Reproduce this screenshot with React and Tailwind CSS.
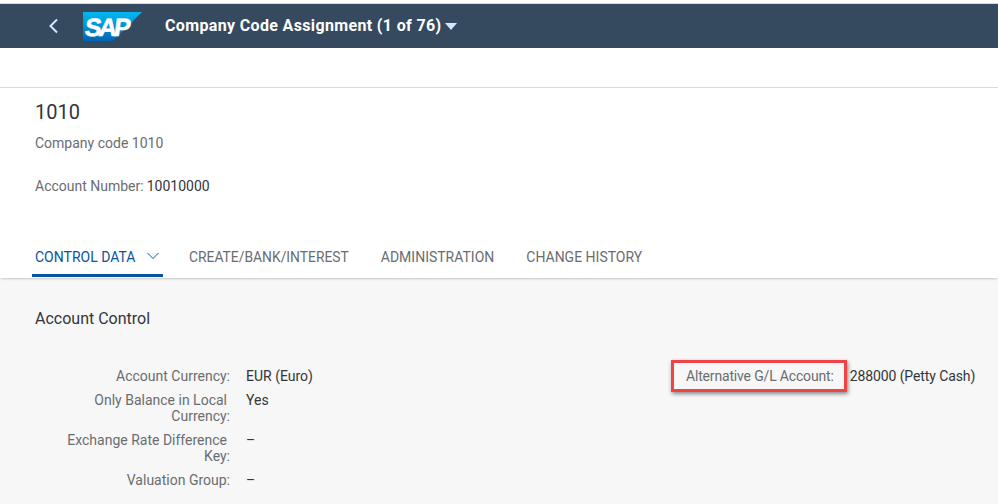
import React from "react";

function SapLogo() {
  return (
    <svg width="60" height="30" viewBox="0 0 60 30" className="block">
      <defs>
        <linearGradient id="sapGrad" x1="0" y1="0" x2="0" y2="1">
          <stop offset="0" stopColor="#00b8f1" />
          <stop offset="0.5" stopColor="#0092d6" />
          <stop offset="1" stopColor="#0063b4" />
        </linearGradient>
      </defs>
      <polygon points="0,0 59,0 30,29 0,29" fill="url(#sapGrad)" />
      <text x="4" y="24" transform="skewX(-7)" fontFamily="Liberation Sans" fontWeight="700" fontSize="25" letterSpacing="-2.8" stroke="#ffffff" strokeWidth="0.6" fill="#ffffff">SAP</text>
    </svg>
  );
}

function Row({ lines, value }) {
  return (
    <div className="flex items-start">
      <div className="w-[230px] shrink-0 text-right text-[#6a6d70] leading-[16px]">
        {lines.map((line, i) => (
          <div key={i} className={i < lines.length - 1 ? "pr-[3px]" : ""}>{line}</div>
        ))}
      </div>
      <div className="ml-4 text-[#32363a] leading-[16px]">{value}</div>
    </div>
  );
}

export default function App() {
  return (
    <div className="w-[998px] h-[504px] overflow-hidden bg-white relative font-['Roboto','Liberation_Sans',sans-serif] text-[14px]">
      <div className="h-1 bg-white border-b border-[#d8d8d8]" />
      <header className="h-11 bg-[#354a5f] flex items-center pl-[48px]">
        <svg width="12" height="16" viewBox="0 0 12 16" fill="none" stroke="#d1e8ff" strokeWidth="2">
          <path d="M9 1.5 L2.5 8 L9 14.5" />
        </svg>
        <div className="ml-[23px] mt-px">
          <SapLogo />
        </div>
        <div className="ml-[22px] flex items-center text-white font-bold text-[16px] tracking-[0.35px]">
          Company Code Assignment (1 of 76)
          <span className="ml-[4px] mt-px w-0 h-0 border-l-[6px] border-r-[6px] border-t-[7px] border-l-transparent border-r-transparent border-t-[#d1e8ff]" />
        </div>
      </header>
      <div className="h-10 border-b border-[#d9d9d9]" />
      <section className="pl-[35px] pt-[12px]">
        <h1 className="text-[20px] leading-[24px] text-[#32363a]">1010</h1>
        <p className="mt-[10px] text-[#6a6d70] leading-[18px]">Company code 1010</p>
        <p className="mt-[25px] leading-[18px] text-[#6a6d70]">
          Account Number:<span className="ml-[3px] text-[#32363a]">10010000</span>
        </p>
      </section>
      <nav className="mt-[37px] h-[46px] flex items-start pl-8 shadow-[0_2px_2px_-1px_rgba(0,0,0,0.2)] relative">
        <div className="h-[45px] w-[131px] pl-[3px] pt-[16px] border-b-[3px] border-[#0854a0] text-[#0854a0] flex items-start leading-[18px]">
          CONTROL DATA
          <svg width="12" height="8" viewBox="0 0 12 8" fill="none" stroke="#0854a0" className="ml-[12px] mt-[4px]">
            <path d="M0.5 1 L6 6.5 L11.5 1" />
          </svg>
        </div>
        <div className="ml-[26px] pt-[16px] leading-[18px] text-[#6a6d70] text-[13.85px]">CREATE/BANK/INTEREST</div>
        <div className="ml-8 pt-[16px] leading-[18px] text-[#6a6d70]">ADMINISTRATION</div>
        <div className="ml-8 pt-[16px] leading-[18px] text-[#6a6d70]">CHANGE HISTORY</div>
      </nav>
      <main className="h-[230px] bg-[#f7f7f7]">
        <h2 className="pl-[35px] pt-[31px] text-[16px] leading-[20px] text-[#32363a]">Account Control</h2>
        <div className="flex mt-[39px]">
          <div className="flex flex-col gap-2 w-[600px]">
            <Row lines={["Account Currency:"]} value="EUR (Euro)" />
            <Row lines={["Only Balance in Local", "Currency:"]} value="Yes" />
            <Row lines={["Exchange Rate Difference", "Key:"]} value="–" />
            <Row lines={["Valuation Group:"]} value="–" />
          </div>
          <div className="flex items-baseline h-4 leading-[16px] pl-[86px]">
            <span className="text-[#6a6d70] text-[14px] tracking-[-0.17px] whitespace-nowrap">Alternative G/L Account:</span>
            <span className="ml-[16px] text-[#32363a] text-[14px] tracking-[-0.1px] whitespace-nowrap">288000 (Petty Cash)</span>
          </div>
        </div>
      </main>
      <div className="absolute left-[671px] top-[360px] w-[176px] h-[32px] border-[3px] border-[#f04444] shadow-[1px_2px_4px_rgba(0,0,0,0.45)]" />
    </div>
  );
}
